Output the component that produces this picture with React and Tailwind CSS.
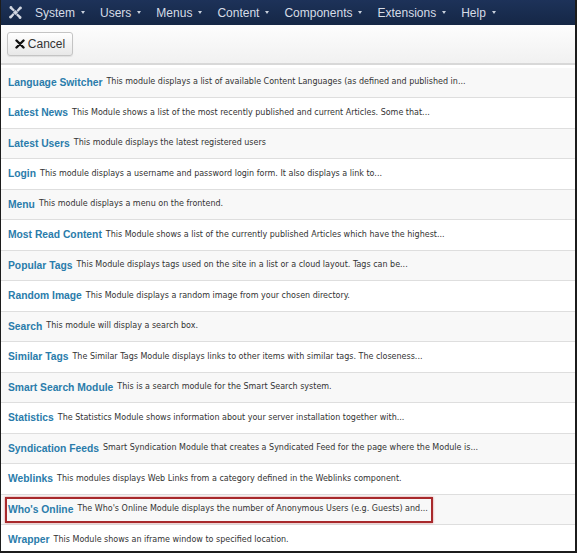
import React from "react";

const menus = ["System", "Users", "Menus", "Content", "Components", "Extensions", "Help"];

const modules = [
  ["Language Switcher", "This module displays a list of available Content Languages (as defined and published in..."],
  ["Latest News", "This Module shows a list of the most recently published and current Articles. Some that..."],
  ["Latest Users", "This module displays the latest registered users"],
  ["Login", "This module displays a username and password login form. It also displays a link to..."],
  ["Menu", "This module displays a menu on the frontend."],
  ["Most Read Content", "This Module shows a list of the currently published Articles which have the highest..."],
  ["Popular Tags", "This Module displays tags used on the site in a list or a cloud layout. Tags can be..."],
  ["Random Image", "This Module displays a random image from your chosen directory."],
  ["Search", "This module will display a search box."],
  ["Similar Tags", "The Similar Tags Module displays links to other items with similar tags. The closeness..."],
  ["Smart Search Module", "This is a search module for the Smart Search system."],
  ["Statistics", "The Statistics Module shows information about your server installation together with..."],
  ["Syndication Feeds", "Smart Syndication Module that creates a Syndicated Feed for the page where the Module is..."],
  ["Weblinks", "This modules displays Web Links from a category defined in the Weblinks component."],
  ["Who's Online", "The Who's Online Module displays the number of Anonymous Users (e.g. Guests) and..."],
  ["Wrapper", "This Module shows an iframe window to specified location."],
];

function JoomlaLogo() {
  return (
    <svg width="13" height="13" viewBox="0 0 26 26" fill="#d3d8e2">
      <path d="M3 6a3 3 0 1 1 4-3l5 5-3 3-5-4z" />
      <path d="M20 3a3 3 0 1 1 3 4l-5 5-3-3 4-5z" />
      <path d="M23 20a3 3 0 1 1-4 3l-5-5 3-3 5 4z" />
      <path d="M6 23a3 3 0 1 1-3-4l5-5 3 3-4 5z" />
      <rect x="9.5" y="9.5" width="7" height="7" transform="rotate(45 13 13)" />
    </svg>
  );
}

function Caret() {
  return (
    <span className="ml-[6px] inline-block w-0 h-0 border-l-[2.5px] border-r-[2.5px] border-t-[3px] border-l-transparent border-r-transparent border-t-[#c9d0dc] align-middle" />
  );
}

export default function App() {
  return (
    <div className="w-[577px] h-[553px] overflow-hidden bg-white border-l border-r-2 border-b-2 border-[#1c1c1c] flex flex-col" style={{ fontFamily: '"Liberation Sans", Arial, sans-serif' }}>
      {/* Top menu */}
      <div className="h-[25px] shrink-0 bg-gradient-to-b from-[#1d3259] to-[#152746] flex items-center">
        <div className="w-[27px] flex items-center justify-center pl-[1px]">
          <JoomlaLogo />
        </div>
        {menus.map((m) => (
          <div key={m} className="pl-[7px] pr-[8px] flex items-center text-[12px] text-[#d6dce6]">
            {m}
            <Caret />
          </div>
        ))}
      </div>

      {/* Toolbar */}
      <div className="h-[40px] shrink-0 bg-gradient-to-b from-[#fdfdfd] to-[#f1f1f1] border-b-2 border-[#d8d8d8] flex items-center pl-[6px]">
        <button className="h-[24px] w-[66px] flex items-center justify-center gap-[3px] rounded-[3px] border border-[#c4c4c4] bg-gradient-to-b from-white to-[#e8e8e8] text-[12px] text-[#333] shadow-[0_1px_1px_rgba(0,0,0,0.08)]">
          <svg width="10" height="10" viewBox="0 0 10 10">
            <path d="M1.5 1.5l7 7M8.5 1.5l-7 7" stroke="#111" strokeWidth="2.4" strokeLinecap="round" />
          </svg>
          Cancel
        </button>
      </div>

      {/* Module list */}
      <div className="flex-1 pt-[2.5px]">
        {modules.map(([title, desc], i) => (
          <div
            key={title}
            className={`relative h-[30.5px] flex items-center pl-[7px] border-b border-[#dedede] ${i % 2 === 0 ? "bg-[#f8f8f8]" : "bg-white"}`}
          >
            <span className="text-[10.3px] font-bold text-[#2a7cab] whitespace-nowrap">{title}</span>
            <span className="ml-[4px] text-[8px] text-[#333] whitespace-nowrap" style={{ fontFamily: '"DejaVu Sans", Verdana, sans-serif' }}>
              {desc}
            </span>
            {title === "Who's Online" && (
              <div className="absolute left-[4px] top-[2px] w-[428px] h-[26px] border-2 border-[#a8292c] shadow-[0_0_2px_rgba(200,60,60,0.6)]" />
            )}
          </div>
        ))}
      </div>
    </div>
  );
}
